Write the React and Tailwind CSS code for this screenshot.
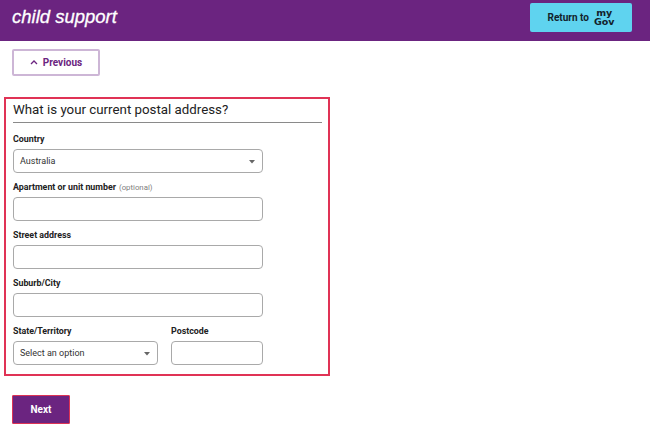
import React from "react";

const Caret = () => (
  <svg width="6" height="4" viewBox="0 0 6 4" className="block"><path d="M0 0h6L3 3.6z" fill="#666" /></svg>
);

const fieldBox = "h-[24px] rounded-[4px] border border-[#a9a9a9] bg-white flex items-center justify-between pl-[6px] pt-[1px] text-[9px] text-[#333]";
const label = "h-[12px] text-[8.85px] font-bold leading-[12px] text-[#222] mb-[4px] whitespace-nowrap";

function Field({ title, extra, children, className = "" }) {
  return (
    <div className={className}>
      <div className={label}>
        {title}
        {extra && <span className="ml-[3px] font-normal text-[7.8px] text-[#808080]">{extra}</span>}
      </div>
      {children}
    </div>
  );
}

export default function App() {
  return (
    <div className="w-[650px] h-[428px] bg-white overflow-hidden font-['Roboto',sans-serif]">
      <header className="h-[41px] bg-[#6b2480] flex items-center justify-between pl-[12px] pr-[18px]">
        <div className="italic font-medium text-[18.5px] text-white font-['Liberation_Sans',sans-serif] -mt-[7px] [-webkit-text-stroke:0.3px_white]">child support</div>
        <div className="w-[102px] h-[29px] -mt-[7px] bg-[#5fd3ef] rounded-[2px] flex items-center justify-center gap-[5px] text-[#12222b]">
          <span className="text-[10px] font-bold">Return to</span>
          <span className="flex flex-col items-center text-[9.5px] font-bold leading-[9px] font-['DejaVu_Sans',sans-serif]"><span>my</span><span>Gov</span></span>
        </div>
      </header>

      <div className="pl-[12px] pt-[8px]">
        <button className="w-[88px] h-[27px] rounded-[2px] border-2 border-[#cdb6d6] bg-white flex items-center justify-center gap-[5px] text-[10px] font-bold text-[#6b2480]">
          <svg width="8" height="5" viewBox="0 0 8 5" fill="none"><path d="M1 4l3-3 3 3" stroke="#6b2480" strokeWidth="1.3" /></svg>
          Previous
        </button>
      </div>

      <section className="ml-[4px] mt-[21px] w-[326px] h-[279px] border-2 border-[#e03355] pl-[7px] pr-[6px] pt-[1px]">
        <h1 className="text-[13.3px] leading-[20px] text-[#222] border-b border-[#8a8a8a] pb-[2px]">What is your current postal address?</h1>
        <div className="w-[250px] mt-[10px] flex flex-col gap-[8px]">
          <Field title="Country">
            <div className={fieldBox}>Australia<span className="mr-[7px]"><Caret /></span></div>
          </Field>
          <Field title="Apartment or unit number" extra="(optional)"><div className={fieldBox} /></Field>
          <Field title="Street address"><div className={fieldBox} /></Field>
          <Field title="Suburb/City"><div className={fieldBox} /></Field>
          <div className="flex gap-[13px]">
            <Field title="State/Territory" className="w-[145px]">
              <div className={fieldBox}>Select an option<span className="mr-[7px]"><Caret /></span></div>
            </Field>
            <Field title="Postcode" className="w-[92px]"><div className={fieldBox} /></Field>
          </div>
        </div>
      </section>

      <button className="block ml-[12px] mt-[19px] w-[58px] h-[29px] rounded-[1px] bg-[#6b2480] border border-[#dd3355] text-white text-[10px] font-bold">Next</button>
    </div>
  );
}
